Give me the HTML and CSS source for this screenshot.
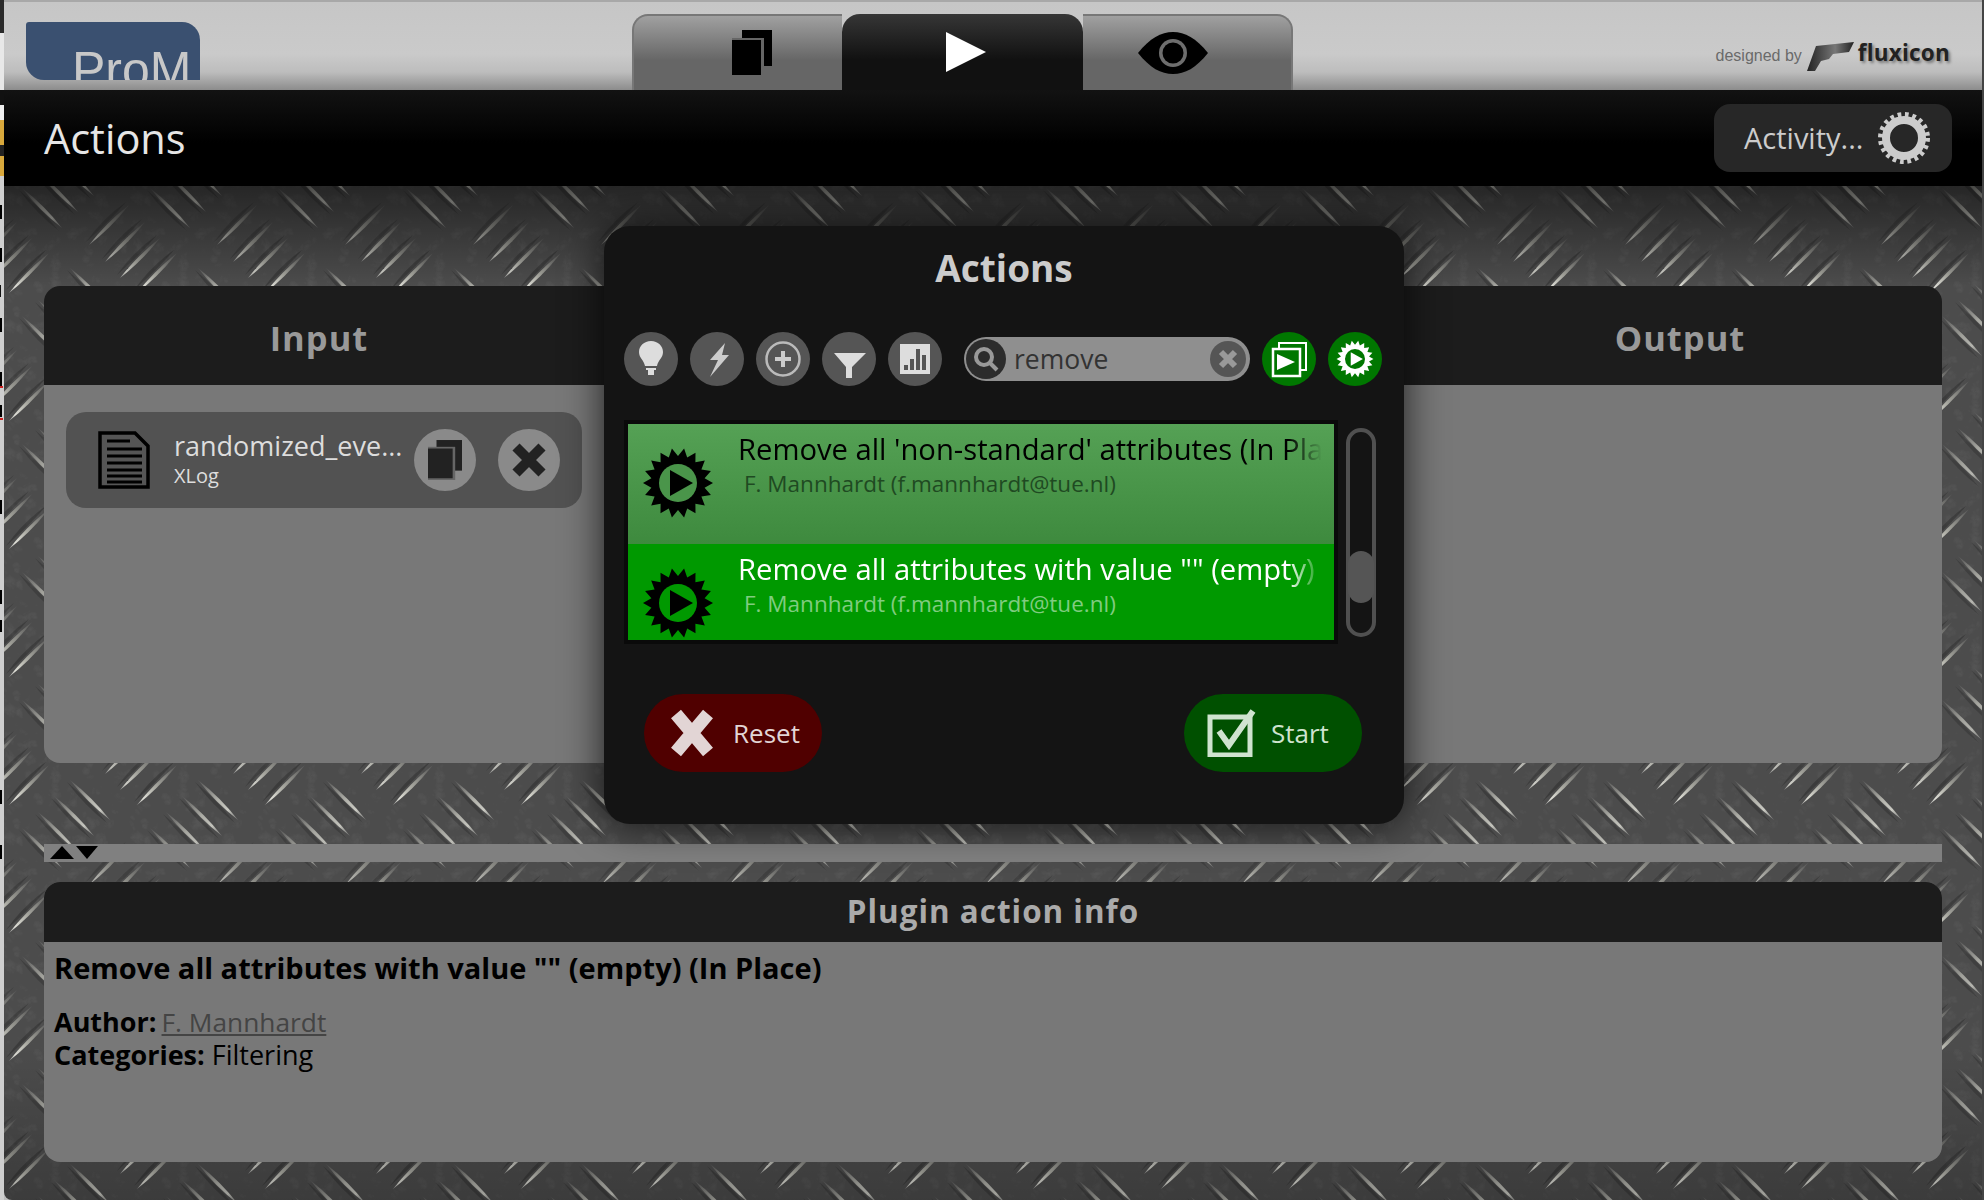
FILE: index.html
```html
<!DOCTYPE html>
<html lang="en">
<head>
<meta charset="utf-8">
<title>ProM Actions</title>
<link rel="stylesheet" href="styles.css">
</head>
<body>
<svg class="defs" width="0" height="0" aria-hidden="true">
  <symbol id="sun" viewBox="-36 -36 72 72">
    <polygon class="sun-body" points="35,0 26.6,4.7 32.9,12 23.4,13.5 26.8,22.5 17.4,20.7 17.5,30.3 9.2,25.4 6.1,34.5 0,27 -6.1,34.5 -9.2,25.4 -17.5,30.3 -17.4,20.7 -26.8,22.5 -23.4,13.5 -32.9,12 -26.6,4.7 -35,0 -26.6,-4.7 -32.9,-12 -23.4,-13.5 -26.8,-22.5 -17.4,-20.7 -17.5,-30.3 -9.2,-25.4 -6.1,-34.5 0,-27 6.1,-34.5 9.2,-25.4 17.5,-30.3 17.4,-20.7 26.8,-22.5 23.4,-13.5 32.9,-12 26.6,-4.7"/>
    <circle class="sun-hole" r="19"/>
    <polygon class="sun-body" points="-8,-13 15,0 -8,13"/>
  </symbol>
  <symbol id="copy" viewBox="0 0 40 47">
    <rect x="10" y="0" width="30" height="36" fill="currentColor"/>
    <rect x="0" y="8" width="32" height="39" fill="#666"/>
    <rect x="0" y="10" width="29" height="35" fill="currentColor"/>
  </symbol>
</svg>
<div class="window">
  <div class="edge-left"></div>
  <div class="app">
    <header class="topbar">
      <div class="logo"><span class="logo-text">ProM</span></div>
      <nav class="tabs">
        <div class="tab tab-side tab-first">
          <svg class="tab-copy" width="40" height="47"><use href="#copy"/></svg>
        </div>
        <div class="tab tab-active">
          <svg width="40" height="40" viewBox="0 0 40 40"><polygon points="0,0 40,20 0,40" fill="#fff"/></svg>
        </div>
        <div class="tab tab-side tab-last">
          <svg width="70" height="42" viewBox="0 0 70 42">
            <path d="M0 21C12 6 23 0 35 0S58 6 70 21C58 36 47 42 35 42S12 36 0 21Z" fill="#000"/>
            <circle cx="35" cy="21" r="14" fill="#6e6e6e"/>
            <circle cx="35" cy="21" r="10.5" fill="#000"/>
          </svg>
        </div>
      </nav>
      <div class="credit">
        <span class="credit-by">designed by</span>
        <svg class="credit-mark" width="47" height="30" viewBox="0 0 47 30">
          <defs><linearGradient id="wing" x1="0" y1="0" x2="1" y2="0"><stop offset="0" stop-color="#222"/><stop offset=".6" stop-color="#777"/><stop offset="1" stop-color="#222"/></linearGradient></defs>
          <path d="M9 4L47 0L42 10L26 12L22 17L14 19L8 29L0 29Z" fill="url(#wing)"/>
        </svg>
        <span class="credit-name">fluxicon</span>
      </div>
    </header>

    <div class="titlebar">
      <h1 class="page-title">Actions</h1>
      <div class="activity">
        <span>Activity...</span>
        <svg width="52" height="52" viewBox="0 0 52 52" fill="none">
          <circle cx="26" cy="26" r="18" stroke="#ccc" stroke-width="8"/>
          <circle cx="26" cy="26" r="23.5" stroke="#ccc" stroke-width="5" stroke-dasharray="3.7 3.7"/>
        </svg>
      </div>
    </div>

    <main class="plate">
      <section class="panel">
        <div class="col col-input">
          <h2 class="col-head">Input</h2>
          <div class="col-body">
            <div class="item">
              <svg class="doc" width="52" height="58" viewBox="0 0 52 58">
                <path d="M2 2H37L50 15V56H2Z" fill="#555" stroke="#000" stroke-width="3.5"/>
                <path d="M9 10H32M9 18H44M9 25H44M9 32H44M9 39H44M9 45H44M9 51H44" stroke="#000" stroke-width="3"/>
              </svg>
              <div class="item-text">
                <div class="item-name">randomized_eve...</div>
                <div class="item-type">XLog</div>
              </div>
              <div class="round-btn">
                <svg width="34" height="42" viewBox="0 0 40 47" class="ink-dark"><use href="#copy"/></svg>
              </div>
              <div class="round-btn">
                <svg width="36" height="36" viewBox="0 0 36 36"><path d="M5 5L31 31M31 5L5 31" stroke="#222" stroke-width="10"/></svg>
              </div>
            </div>
          </div>
        </div>
        <div class="col col-mid">
          <div class="col-head"></div>
          <div class="col-body"></div>
        </div>
        <div class="col col-output">
          <h2 class="col-head">Output</h2>
          <div class="col-body"></div>
        </div>
      </section>

      <div class="splitter">
        <span class="tri-up"></span>
        <span class="tri-down"></span>
      </div>

      <section class="info">
        <h2 class="info-head">Plugin action info</h2>
        <div class="info-body">
          <p class="info-title">Remove all attributes with value "" (empty) (In Place)</p>
          <p class="info-line"><b>Author:</b> <a class="info-link">F. Mannhardt</a></p>
          <p class="info-line"><b>Categories:</b> Filtering</p>
        </div>
      </section>

      <div class="modal">
        <h2 class="modal-title">Actions</h2>
        <div class="toolbar">
          <div class="tool">
            <svg width="54" height="54" viewBox="0 0 54 54"><path d="M27 9C20 9 15 14 15 20C15 26 20 28 21 34H33C34 28 39 26 39 20C39 14 34 9 27 9ZM22 36H32V38H30V43H24V38H22Z" fill="#ddd"/></svg>
          </div>
          <div class="tool">
            <svg width="54" height="54" viewBox="0 0 54 54"><polygon points="35,11 20,28 28,28 20,45 39,23 32,23" fill="#ccc"/></svg>
          </div>
          <div class="tool">
            <svg width="54" height="54" viewBox="0 0 54 54"><circle cx="27" cy="27" r="16.5" fill="none" stroke="#bbb" stroke-width="2.5"/><path d="M27 19V35M19 27H35" stroke="#ccc" stroke-width="4"/></svg>
          </div>
          <div class="tool">
            <svg width="54" height="54" viewBox="0 0 54 54"><polygon points="12,21 44,21 30,35 30,46 24,46 24,35" fill="#ddd"/></svg>
          </div>
          <div class="tool">
            <svg width="54" height="54" viewBox="0 0 54 54"><rect x="12" y="12" width="30" height="30" fill="#ddd"/><path d="M16 33H20V38H16ZM22 27H26V38H22ZM28 17H32V38H28ZM34 23H38V38H34Z" fill="#555"/></svg>
          </div>
          <div class="search">
            <span class="search-lens">
              <svg width="40" height="40" viewBox="0 0 40 40"><circle cx="18" cy="18" r="8" fill="none" stroke="#999" stroke-width="4"/><path d="M24 24L31 31" stroke="#999" stroke-width="4"/></svg>
            </span>
            <span class="search-text">remove</span>
            <span class="search-clear">
              <svg width="36" height="36" viewBox="0 0 36 36"><path d="M11 11L25 25M25 11L11 25" stroke="#999" stroke-width="6"/></svg>
            </span>
          </div>
          <div class="tool tool-green">
            <svg width="54" height="54" viewBox="0 0 54 54">
              <rect x="17" y="11" width="27" height="27" fill="none" stroke="#fff" stroke-width="2"/>
              <rect x="11" y="17" width="27" height="27" fill="#007700" stroke="#fff" stroke-width="2.5"/>
              <polygon points="15,22 33,30 15,38" fill="#fff"/>
            </svg>
          </div>
          <div class="tool tool-green">
            <svg class="sun-white" width="38" height="38"><use href="#sun"/></svg>
          </div>
        </div>

        <div class="chooser">
          <div class="list">
            <div class="row row-plain">
              <svg class="row-icon" width="72" height="72"><use href="#sun"/></svg>
              <div class="row-text">
                <div class="row-title">Remove all 'non-standard' attributes (In Place)</div>
                <div class="row-sub">F. Mannhardt (f.mannhardt@tue.nl)</div>
              </div>
            </div>
            <div class="row row-selected">
              <svg class="row-icon" width="72" height="72"><use href="#sun"/></svg>
              <div class="row-text">
                <div class="row-title">Remove all attributes with value "" (empty) (In Place)</div>
                <div class="row-sub">F. Mannhardt (f.mannhardt@tue.nl)</div>
              </div>
            </div>
          </div>
          <div class="scroll"><div class="scroll-thumb"></div></div>
        </div>

        <div class="actions">
          <div class="pill pill-reset">
            <svg width="46" height="48" viewBox="0 0 46 48"><path d="M7 5L39 43M39 5L7 43" stroke="#e2d5d5" stroke-width="13"/></svg>
            <span>Reset</span>
          </div>
          <div class="pill pill-start">
            <svg width="50" height="48" viewBox="0 0 50 48" fill="none">
              <rect x="3" y="8" width="40" height="38" stroke="#cfe3cf" stroke-width="5"/>
              <path d="M12 22L22 36L46 2" stroke="#cfe3cf" stroke-width="6"/>
            </svg>
            <span>Start</span>
          </div>
        </div>
      </div>
    </main>
  </div>
  <div class="edge-right"></div>
</div>
</body>
</html>
```

FILE: styles.css
```css
* { box-sizing: border-box; }
html, body { margin: 0; padding: 0; height: 1200px; }
body {
  font-family: "Open Sans", "DejaVu Sans", sans-serif;
  background: #222;
  overflow: hidden;
}
h1, h2, p { margin: 0; font-weight: normal; }
.defs { position: absolute; width: 0; height: 0; }

.sun-body { fill: var(--sun, #000); }
.sun-hole { fill: var(--sun-hole, #090); }

.window { display: flex; width: 1984px; height: 1200px; overflow: hidden; }
.edge-left {
  width: 4px;
  flex: none;
  background:
    linear-gradient(#000 0 0) 0 205px / 2px 14px no-repeat,
    linear-gradient(#000 0 0) 0 248px / 2px 14px no-repeat,
    linear-gradient(#111 0 0) 0 285px / 1px 12px no-repeat,
    linear-gradient(#000 0 0) 0 318px / 2px 14px no-repeat,
    linear-gradient(#000 0 0) 0 372px / 2px 14px no-repeat,
    linear-gradient(#c22 0 0) 0 386px / 3px 2px no-repeat,
    linear-gradient(#000 0 0) 0 405px / 2px 12px no-repeat,
    linear-gradient(#c22 0 0) 0 418px / 3px 2px no-repeat,
    linear-gradient(#000 0 0) 0 500px / 2px 14px no-repeat,
    linear-gradient(#000 0 0) 0 590px / 2px 14px no-repeat,
    linear-gradient(#000 0 0) 0 620px / 2px 12px no-repeat,
    linear-gradient(#000 0 0) 0 790px / 2px 14px no-repeat,
    linear-gradient(#000 0 0) 0 845px / 2px 14px no-repeat,
    linear-gradient(#2a2a2a 0 33px, #e8e8e8 33px 90px, #111 90px 105px, #eee 105px 120px, #d8a83c 120px 145px, #222 145px 156px, #d8a83c 156px 176px, #cfcfcf 176px);
}
.edge-right { width: 2px; flex: none; background: #444; }

.app { flex: 1; display: flex; flex-direction: column; min-width: 0; background: #bbb; }

/* top bar */
.topbar {
  height: 90px;
  flex: none;
  display: flex;
  align-items: flex-start;
  padding: 0 32px 0 22px;
  background: linear-gradient(#a8a8a8 0 2px, #c6c6c6 2px, #cacaca 60%, #bdbdbd 80%, #8c8c8c 100%);
}
.logo {
  width: 174px;
  height: 58px;
  margin-top: 22px;
  background: #3a5070;
  border-radius: 3px 18px 0 18px;
  overflow: hidden;
  padding-left: 46px;
}
.logo-text {
  display: block;
  font-family: "Liberation Sans", sans-serif;
  font-size: 50px;
  line-height: 58px;
  padding-top: 19px;
  color: #c8c8c8;
}
.tabs { display: flex; margin-left: 432px; margin-top: 14px; height: 76px; }
.tab { display: flex; justify-content: flex-start; }
.tab-side {
  width: 210px;
  border: 2px solid #777;
  border-bottom: 0;
  background: linear-gradient(#a0a0a0, #666 60%);
  color: #000;
  padding-top: 14px;
}
.tab-first { border-radius: 16px 0 0 0; border-right: 0; padding-left: 98px; }
.tab-last { border-radius: 0 16px 0 0; border-left: 0; padding-left: 55px; padding-top: 16px; }
.tab-active {
  width: 241px;
  border-radius: 18px 18px 0 0;
  background: linear-gradient(#363636, #111 60%);
  padding: 18px 0 0 104px;
}
.credit { margin-left: auto; margin-top: 43px; display: flex; align-items: flex-start; color: #666; }
.credit-by { font: 16px/26px "Liberation Sans", sans-serif; margin-right: 5px; color: #6a6a6a; }
.credit-mark { margin-right: 4px; margin-top: -1px; }
.credit-name {
  font: bold 22.5px/24px "Open Sans", sans-serif;
  color: #222;
  letter-spacing: .2px;
  text-shadow: 2px 2px 3px rgba(0,0,0,.4);
  margin-top: -2px;
}

/* title bar */
.titlebar {
  height: 96px;
  flex: none;
  display: flex;
  align-items: center;
  justify-content: space-between;
  padding: 0 30px 0 40px;
  background: linear-gradient(#121212, #000 55%);
}
.page-title { font-size: 41.5px; color: #e6e6e6; }
.activity {
  width: 238px;
  height: 68px;
  display: flex;
  align-items: center;
  justify-content: space-between;
  padding: 0 22px 0 30px;
  background: #272727;
  border-radius: 16px;
  color: #ccc;
  font-size: 29px;
  line-height: 66px;
}

/* plate */
.plate {
  position: relative;
  flex: 1;
  min-height: 0;
  padding: 100px 40px 0;
  border-bottom-left-radius: 8px;
  background-color: #4b4b4b;
  background-image:
    linear-gradient(rgba(0,0,0,.5), rgba(0,0,0,0) 100px, rgba(0,0,0,0) 860px, rgba(0,0,0,.22)),
    url("data:image/svg+xml,%3Csvg xmlns='http://www.w3.org/2000/svg' xmlns:xlink='http://www.w3.org/1999/xlink' width='128' height='128'%3E%3Cdefs%3E%3ClinearGradient id='g' x1='0' y1='0' x2='1' y2='1'%3E%3Cstop offset='0' stop-color='%23555'/%3E%3Cstop offset='.5' stop-color='%23bdbdb5'/%3E%3Cstop offset='.75' stop-color='%23d8d8d0'/%3E%3Cstop offset='1' stop-color='%23777'/%3E%3C/linearGradient%3E%3ClinearGradient id='h' x1='1' y1='0' x2='0' y2='1'%3E%3Cstop offset='0' stop-color='%23555'/%3E%3Cstop offset='.55' stop-color='%23a8a8a0'/%3E%3Cstop offset='.85' stop-color='%23e0e0d8'/%3E%3Cstop offset='1' stop-color='%23999'/%3E%3C/linearGradient%3E%3Cfilter id='n' x='0' y='0' width='100%25' height='100%25'%3E%3CfeTurbulence baseFrequency='.06' numOctaves='3' stitchTiles='stitch' seed='4'/%3E%3CfeColorMatrix values='0 0 0 0 .5 0 0 0 0 .5 0 0 0 0 .5 1.2 0 0 0 -.45'/%3E%3C/filter%3E%3Cg id='d'%3E%3Cpath d='M-3 2Q18 19 37 43Q15 26 -3 2z' fill='%23000' opacity='.22'/%3E%3Cpath d='M0 0Q22.5 17.5 40 40Q17.5 22.5 0 0z' fill='url(%23g)'/%3E%3C/g%3E%3Cg id='u'%3E%3Cpath d='M-3 -3Q-19 16 -43 37Q-26 13 -3 -3z' fill='%23000' opacity='.22'/%3E%3Cpath d='M0 0Q-17.5 22.5 -40 40Q-22.5 17.5 0 0z' fill='url(%23h)'/%3E%3C/g%3E%3Cg id='t'%3E%3Cuse xlink:href='%23d' transform='translate(22 60)' opacity='.75'/%3E%3Cuse xlink:href='%23d' transform='translate(38 44)' opacity='.8'/%3E%3Cuse xlink:href='%23d' transform='translate(54 28)' opacity='.85'/%3E%3Cuse xlink:href='%23d' transform='translate(70 12)' opacity='.9'/%3E%3Cuse xlink:href='%23u' transform='translate(129 77)' opacity='.7'/%3E%3Cuse xlink:href='%23u' transform='translate(145 94)' opacity='.8'/%3E%3Cuse xlink:href='%23u' transform='translate(160 110)' opacity='.9'/%3E%3Cuse xlink:href='%23u' transform='translate(177 125)'/%3E%3C/g%3E%3C/defs%3E%3Crect width='128' height='128' fill='%234c4c4c'/%3E%3Crect width='128' height='128' filter='url(%23n)' opacity='.18'/%3E%3Cuse xlink:href='%23t'/%3E%3Cuse xlink:href='%23t' x='-128'/%3E%3Cuse xlink:href='%23t' y='-128'/%3E%3Cuse xlink:href='%23t' x='-128' y='-128'/%3E%3Cuse xlink:href='%23t' x='128'/%3E%3Cuse xlink:href='%23t' y='128'/%3E%3C/svg%3E");
  background-repeat: no-repeat, repeat;
  background-position: 0 0, -4px -186px;
}

/* top panel */
.panel {
  height: 477px;
  display: flex;
  border-radius: 16px;
  overflow: hidden;
}
.col { display: flex; flex-direction: column; }
.col-input { width: 550px; }
.col-mid { flex: 1; }
.col-output { width: 524px; }
.col-head {
  height: 99px;
  flex: none;
  background: #1c1c1c;
  color: #999;
  font-size: 34.5px;
  font-weight: 700;
  text-align: center;
  line-height: 104px;
  letter-spacing: 1px;
}
.col-body { flex: 1; background: #787878; padding: 27px 0 0 22px; }

.item {
  width: 516px;
  height: 96px;
  display: flex;
  align-items: center;
  padding: 0 22px 0 32px;
  background: #525252;
  border-radius: 20px;
}
.item-text { margin-left: 24px; width: 240px; flex: none; margin-top: -2px; }
.item-name { color: #ddd; font-size: 27px; line-height: 34px; white-space: nowrap; }
.item-type { color: #ddd; font-size: 20px; line-height: 26px; }
.round-btn {
  width: 62px;
  height: 62px;
  flex: none;
  border-radius: 50%;
  background: #8a8a8a;
  display: flex;
  align-items: center;
  justify-content: center;
}
.round-btn + .round-btn { margin-left: 22px; }
.ink-dark { color: #222; }

/* splitter */
.splitter {
  height: 18px;
  margin-top: 81px;
  background: #808080;
  padding: 2px 0 0 6px;
  display: flex;
  gap: 2px;
}
.tri-up, .tri-down { width: 0; height: 0; border-left: 12px solid transparent; border-right: 12px solid transparent; }
.tri-up { border-bottom: 13px solid #000; }
.tri-down { border-top: 13px solid #000; border-left-width: 11px; border-right-width: 11px; }

/* info panel */
.info {
  height: 280px;
  margin-top: 20px;
  border-radius: 16px;
  overflow: hidden;
  background: #787878;
}
.info-head {
  height: 60px;
  background: #1c1c1c;
  color: #aaa;
  font-size: 31.4px;
  font-weight: 700;
  text-align: center;
  line-height: 58px;
  letter-spacing: 1px;
}
.info-body { padding: 8px 10px; color: #000; font-size: 27px; }
.info-title { font-weight: 700; font-size: 29px; line-height: 36px; margin-bottom: 20px; }
.info-line { line-height: 31.5px; }
.info-line b { font-weight: 700; }
.info-link { color: #444; text-decoration: underline; font-size: 26.3px; margin-left: -2px; }

/* modal */
.modal {
  position: absolute;
  left: 600px;
  top: 40px;
  width: 800px;
  height: 598px;
  padding: 0 20px;
  background: #141414;
  border-radius: 26px;
  box-shadow: 0 0 40px rgba(0,0,0,.75);
}
.modal-title {
  height: 84px;
  margin-bottom: 22px;
  color: #ccc;
  font-size: 37px;
  font-weight: 700;
  text-align: center;
  line-height: 84px;
}
.toolbar { display: flex; align-items: center; gap: 12px; }
.tool {
  width: 54px;
  height: 54px;
  flex: none;
  border-radius: 50%;
  background: #555;
  display: flex;
  align-items: center;
  justify-content: center;
}
.tool-green { background: #007700; --sun: #fff; --sun-hole: #007700; }
.search {
  width: 286px;
  height: 44px;
  margin: 0 0 0 10px;
  flex: none;
  display: flex;
  align-items: center;
  border-radius: 22px;
  background: #8f8f8f;
  padding: 0 2px;
}
.search-lens {
  width: 40px;
  height: 40px;
  border-radius: 50%;
  background: #2c2c2c;
  flex: none;
}
.search-text { margin-left: 8px; font-size: 26.5px; line-height: 46px; color: #333; }
.search-clear {
  width: 36px;
  height: 36px;
  margin-left: auto;
  margin-right: 2px;
  border-radius: 50%;
  background: #555;
  flex: none;
}
.search-lens svg, .search-clear svg { display: block; }

.chooser { display: flex; align-items: flex-start; margin-top: 34px; }
.list {
  width: 714px;
  height: 224px;
  border: 4px solid #0a0a0a;
  flex: none;
  overflow: hidden;
}
.row { display: flex; overflow: hidden; padding-left: 14px; }
.row-plain {
  height: 120px;
  background: linear-gradient(#55a155, #3e8a3e);
  --sun-hole: #4a954a;
}
.row-selected { height: 96px; background: #009900; --sun-hole: #009900; }
.row-icon { flex: none; margin-top: 23px; }
.row-text { margin-left: 24px; width: 584px; flex: none; padding-top: 6px; }
.row-title {
  font-size: 29.2px;
  line-height: 38px;
  white-space: nowrap;
  overflow: hidden;
  -webkit-mask-image: linear-gradient(90deg, #000 calc(100% - 34px), transparent 100%);
  mask-image: linear-gradient(90deg, #000 calc(100% - 34px), transparent 100%);
}
.row-sub { margin-left: 6px; margin-top: 2px; font-size: 22.5px; line-height: 28px; white-space: nowrap; }
.row-plain .row-title { color: #000; }
.row-plain .row-sub { color: #1f4a22; }
.row-selected .row-title { color: #fff; }
.row-selected .row-sub { color: #80cc80; }

.scroll {
  width: 30px;
  height: 209px;
  margin: 8px 0 0 8px;
  border: 4px solid #505050;
  border-radius: 15px;
  position: relative;
  flex: none;
}
.scroll-thumb {
  position: absolute;
  left: -2px;
  right: -2px;
  top: 119px;
  height: 52px;
  border-radius: 13px;
  background: #555;
}

.actions { display: flex; justify-content: space-between; margin-top: 50px; padding: 0 22px 0 20px; }
.pill {
  width: 178px;
  height: 78px;
  border-radius: 39px;
  display: flex;
  align-items: center;
  font-size: 26px;
}
.pill-reset { background: #500000; color: #e2d5d5; padding-left: 25px; gap: 18px; }
.pill-start { background: #005000; color: #cfe3cf; padding-left: 23px; gap: 14px; }
```
